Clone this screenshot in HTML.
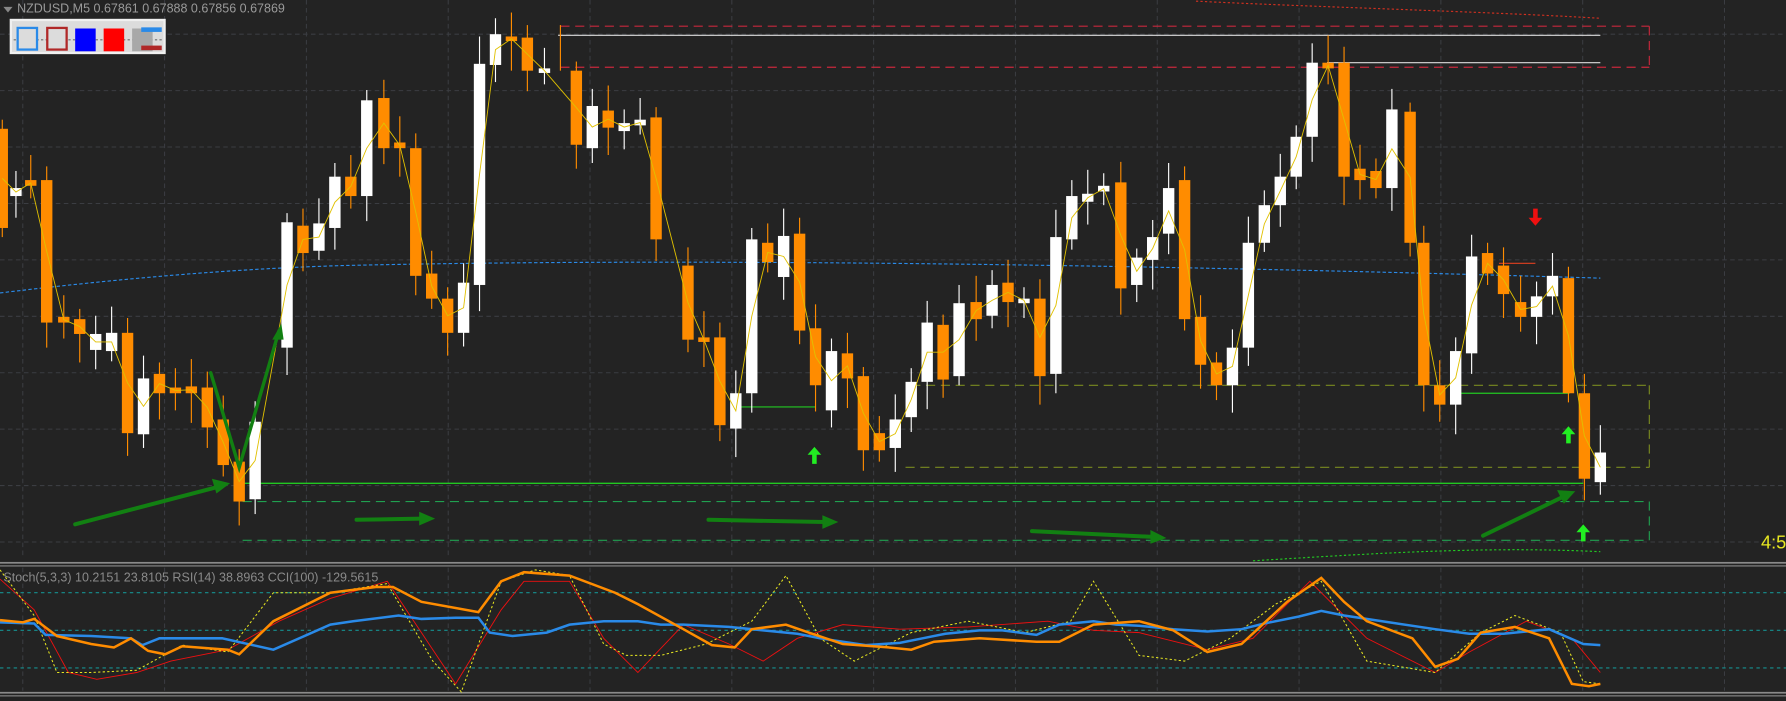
<!DOCTYPE html>
<html><head><meta charset="utf-8"><style>
html,body{margin:0;padding:0;background:#232323;overflow:hidden}
svg{display:block}
</style></head><body>
<svg id="s" width="1786" height="701" viewBox="0 0 1568 615" preserveAspectRatio="none" xmlns="http://www.w3.org/2000/svg" font-family="Liberation Sans, sans-serif">
<rect width="1568" height="615" fill="#232323"/>
<g id="grid" stroke="#3b3d42" stroke-width="0.9" stroke-dasharray="4,3"></g>
<!-- top box -->
<g fill="none" stroke="#c8283c" stroke-width="1" stroke-dasharray="8,5">
<line x1="492" y1="23" x2="1448" y2="23"/><line x1="492" y1="59" x2="1448" y2="59"/><line x1="1448" y1="23" x2="1448" y2="59"/></g>
<line x1="490" y1="31" x2="1405" y2="31" stroke="#ddd" stroke-width="1"/>
<line x1="1165" y1="55" x2="1405" y2="55" stroke="#ddd" stroke-width="1"/>
<path d="M1050,1 C1150,6 1300,10 1405,16" fill="none" stroke="#d03020" stroke-width="1" stroke-dasharray="2,2"/>
<path d="M0,257 C100,245 200,236 300,233 C600,226 1000,232 1405,244" fill="none" stroke="#2a8ae8" stroke-width="1" stroke-dasharray="3,2"/>
<g fill="none" stroke="#7a8a20" stroke-width="1" stroke-dasharray="8,5">
<line x1="800" y1="338" x2="1448" y2="338"/><line x1="795" y1="410" x2="1448" y2="410"/><line x1="1448" y1="338" x2="1448" y2="410"/></g>
<g fill="none" stroke="#20a050" stroke-width="1" stroke-dasharray="8,5">
<line x1="213" y1="440" x2="1448" y2="440"/><line x1="213" y1="474" x2="1448" y2="474"/><line x1="1448" y1="440" x2="1448" y2="474"/></g>
<line x1="210" y1="424" x2="1390" y2="424" stroke="#22c822" stroke-width="1.2"/>
<line x1="648" y1="357" x2="716" y2="357" stroke="#22c822" stroke-width="1"/>
<line x1="1280" y1="345" x2="1378" y2="345" stroke="#22c822" stroke-width="1"/>
<line x1="1316" y1="231" x2="1348" y2="231" stroke="#e04020" stroke-width="1"/>
<path d="M1100,492 C1200,486 1300,479 1405,484" fill="none" stroke="#22c822" stroke-width="1" stroke-dasharray="2,2"/>
<g id="candles"></g>
<!-- arrows -->
<g stroke="#128012" stroke-width="3.5" fill="#128012" stroke-linecap="round">
<line x1="66" y1="460" x2="192" y2="427"/><polygon points="202,424 186,420 190,433" stroke="none"/>
<line x1="313" y1="456" x2="370" y2="455"/><polygon points="382,455 368,449 368,461" stroke="none"/>
<line x1="622" y1="456" x2="724" y2="458"/><polygon points="736,458 722,452 722,464" stroke="none"/>
<line x1="906" y1="466" x2="1012" y2="471"/><polygon points="1024,472 1010,465 1010,477" stroke="none"/>
<line x1="1302" y1="470" x2="1372" y2="436"/><polygon points="1383,431 1367,430 1373,442" stroke="none"/>
<polyline points="185,327 210,410 245,290" fill="none" stroke-width="3"/>
<polygon points="247,284 239,298 249,298" stroke="none"/>
</g>
<g fill="#22ee22">
<path d="M715,392 l6,7 h-4 v8 h-4 v-8 h-4z"/>
<path d="M1377,374 l6,7 h-4 v8 h-4 v-8 h-4z"/>
<path d="M1390,460 l6,7 h-4 v8 h-4 v-8 h-4z"/>
</g>
<path d="M1348,198 l-6,-7 h4 v-8 h4 v8 h4z" fill="#ee1010"/>
<text x="1546" y="481" fill="#e8e820" font-size="16">4:5</text>
<!-- header -->
<polygon points="3,6 11,6 7,11" fill="#888"/>
<text x="15" y="11" fill="#9a9a9a" font-size="11">NZDUSD,M5  0.67861 0.67888 0.67856 0.67869</text>
<rect x="9.5" y="17.5" width="135" height="29" fill="#dcdcdc" stroke="#f0f0f0" stroke-width="2"/>
<line x1="12" y1="35" x2="143" y2="35" stroke="#333" stroke-dasharray="2,2" stroke-width="0.7"/>
<rect x="15.5" y="24.5" width="17" height="19" fill="#dcdcdc" stroke="#2a8ae8" stroke-width="2"/>
<rect x="41.5" y="24.5" width="17" height="19" fill="#dcdcdc" stroke="#b02828" stroke-width="2"/>
<rect x="66" y="25" width="18" height="20" fill="#0000ff"/>
<rect x="91" y="25" width="18" height="20" fill="#ff0000"/>
<rect x="116" y="25" width="18" height="20" fill="#a8a8a8"/>
<rect x="141" y="25" width="0" height="0"/>
<rect x="124" y="24" width="18" height="4" fill="#2a8ae8"/>
<rect x="124" y="40" width="18" height="4" fill="#b02828"/>
<!-- separators -->
<rect x="0" y="493" width="1568" height="1.5" fill="#8a8a8a"/>
<rect x="0" y="496" width="1568" height="1" fill="#8a8a8a"/>
<rect x="0" y="607" width="1568" height="1.5" fill="#8a8a8a"/>
<rect x="0" y="610" width="1568" height="1" fill="#8a8a8a"/>
<g stroke="#169090" stroke-width="1" stroke-dasharray="3,3">
<line x1="0" y1="520" x2="1568" y2="520"/><line x1="0" y1="553" x2="1568" y2="553"/><line x1="0" y1="586" x2="1568" y2="586"/></g>
<text x="3" y="510" fill="#8a8a8a" font-size="11">Stoch(5,3,3) 10.2151 23.8105  RSI(14) 38.8963  CCI(100) -129.5615</text>
<polyline fill="none" stroke="#ee1010" stroke-width="0.8" points="0,508 30,535 60,590 85,596 120,590 150,580 200,570 245,545 290,525 340,510 380,570 400,600 440,535 460,510 500,510 530,560 560,590 600,548 640,565 670,580 700,560 740,548 790,552 850,550 920,545 960,553 1000,555 1060,570 1100,560 1150,510 1200,560 1260,590 1290,572 1340,545 1380,560 1405,590"/>
<polyline fill="none" stroke="#e8e820" stroke-width="0.9" stroke-dasharray="2,2" points="0,500 30,540 50,590 80,590 120,588 160,566 200,572 240,520 290,520 340,512 380,580 405,607 440,510 470,500 500,505 530,565 550,575 580,575 620,565 660,545 690,505 720,560 750,580 800,555 850,545 900,555 940,545 960,510 1000,575 1040,580 1080,560 1120,530 1160,510 1200,580 1260,590 1300,555 1330,540 1370,555 1390,598 1405,600"/>
<polyline fill="none" stroke="#2a8ae8" stroke-width="2.2" points="0,546 30,547 40,557 80,558 115,560 125,566 140,560 195,560 240,570 290,548 310,545 350,540 370,543 400,542 420,542 430,555 450,558 480,555 500,548 530,545 560,545 580,548 600,548 640,550 670,553 700,556 720,560 760,566 790,564 810,560 830,556 860,553 880,553 910,557 930,548 960,545 980,548 1000,549 1030,552 1060,554 1090,552 1110,547 1140,541 1160,536 1180,540 1220,546 1260,552 1290,556 1320,556 1360,552 1390,565 1405,566"/>
<polyline fill="none" stroke="#ff8c00" stroke-width="2.2" points="0,544 20,546 30,543 50,558 80,565 100,568 115,560 130,571 145,574 160,567 200,570 210,574 240,545 290,520 330,515 345,515 370,528 420,537 440,510 460,502 500,505 540,520 560,530 600,552 625,566 645,568 660,552 690,548 710,555 740,565 780,568 800,570 820,563 860,560 910,563 930,563 960,548 1000,545 1030,553 1060,572 1090,565 1130,528 1160,507 1180,528 1200,545 1240,560 1260,585 1280,578 1300,555 1330,550 1360,560 1380,600 1395,602 1405,600"/>
</svg>
<script>
var NS="http://www.w3.org/2000/svg",g=document.getElementById("grid"),c=document.getElementById("candles");
function el(t,a,p){var e=document.createElementNS(NS,t);for(var k in a)e.setAttribute(k,a[k]);p.appendChild(e);return e;}
for(var y=30;y<490;y+=49.5)el("line",{x1:0,y1:y,x2:1568,y2:y},g);
for(var x=20;x<1568;x+=124.5)el("line",{x1:x,y1:0,x2:x,y2:490},g);
for(var x=20;x<1568;x+=124.5)el("line",{x1:x,y1:498,x2:x,y2:606},g);
var d=[[2,0,113,200],[14,1,165,172],[27,0,158,163],[41,0,158,283],[56,0,278,283],[70,0,280,293],[84,1,293,307],[98,1,292,308],[112,0,292,380],[126,1,332,381],[140,0,328,345],[154,0,340,345],[168,0,339,345],[182,0,340,375],[196,0,368,408],[210,0,405,440],[224,1,370,438],[252,1,195,305],[266,0,198,222],[280,1,196,220],[294,1,155,200],[308,0,155,172],[322,1,88,172],[337,0,86,130],[351,0,125,130],[365,0,130,242],[379,0,240,262],[393,0,262,292],[407,1,248,292],[421,1,56,250],[435,1,30,57],[449,0,32,36],[463,0,33,62],[478,1,60,64],[506,0,62,127],[520,1,93,130],[534,0,97,112],[548,1,108,115],[562,1,105,110],[576,0,103,210],[604,0,233,298],[618,0,296,300],[632,0,296,373],[646,1,345,376],[660,1,210,345],[674,0,213,230],[688,1,207,243],[702,0,205,290],[716,0,288,338],[730,1,308,360],[744,0,310,332],[758,0,330,395],[772,0,380,395],[786,1,368,393],[800,1,335,366],[814,1,283,335],[828,0,285,333],[842,1,266,330],[857,0,265,280],[871,1,250,277],[885,0,248,265],[899,1,262,265],[913,0,262,330],[927,1,208,328],[941,1,172,210],[955,1,170,177],[969,1,163,168],[984,0,160,253],[998,1,226,250],[1012,1,208,228],[1026,1,165,205],[1040,0,158,280],[1054,0,278,320],[1068,0,318,338],[1082,1,305,338],[1096,1,213,305],[1110,1,180,213],[1124,1,155,180],[1138,1,120,155],[1152,1,55,120],[1166,0,55,60],[1180,0,55,155],[1194,0,148,158],[1208,0,150,165],[1222,1,96,165],[1238,0,98,213],[1250,0,213,338],[1264,0,338,355],[1278,1,308,355],[1292,1,225,310],[1306,0,222,240],[1320,0,233,258],[1335,0,265,278],[1349,1,260,278],[1363,1,242,260],[1377,0,244,345],[1391,0,345,420],[1405,1,397,423]];
var pts=[];
d.forEach(function(k,i){var col=k[1]?"#ffffff":"#ff8c00";var h=k[3]-k[2];var wt=k[2]-8-(i*7%17),wb=k[3]+8+(i*11%19);
el("line",{x1:k[0],y1:wt,x2:k[0],y2:wb,stroke:col,"stroke-width":1},c);
el("rect",{x:k[0]-5,y:k[2],width:10,height:Math.max(h,4),fill:col},c);pts.push(k[0]+","+((k[2]+k[3])/2));});
el("polyline",{points:pts.join(" "),fill:"none",stroke:"#e0c000","stroke-width":0.8},c);
el("line",{x1:492,y1:22,x2:492,y2:62,stroke:"#ff8c00","stroke-width":1},c);
</script>
</body></html>
